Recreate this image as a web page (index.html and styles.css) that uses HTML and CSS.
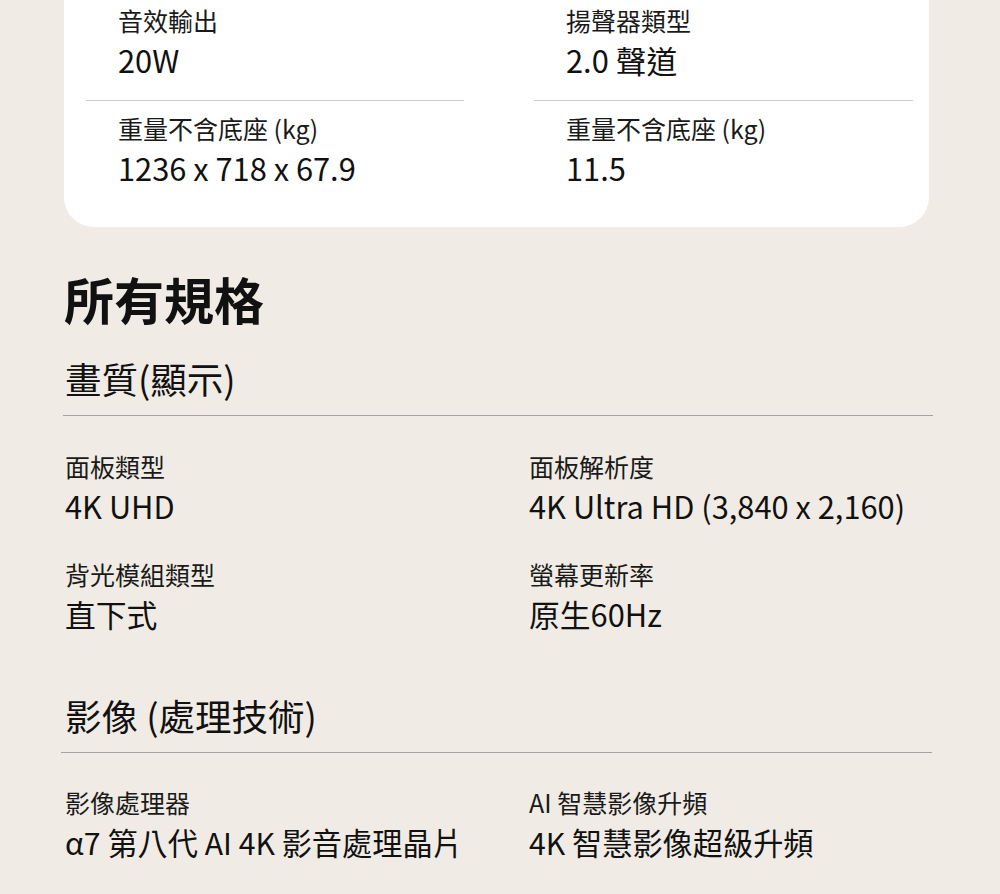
FILE: index.html
```html
<!DOCTYPE html>
<html lang="zh-Hant">
<head>
<meta charset="utf-8">
<title>所有規格</title>
<link rel="stylesheet" href="styles.css">
</head>
<body>
<div class="page">
  <section class="card">
    <div class="card-grid">
      <div class="cell">
        <div class="label">音效輸出</div>
        <div class="value">20W</div>
      </div>
      <div class="cell">
        <div class="label">揚聲器類型</div>
        <div class="value">2.0 聲道</div>
      </div>
      <div class="cell">
        <div class="label">重量不含底座 (kg)</div>
        <div class="value">1236 x 718 x 67.9</div>
      </div>
      <div class="cell">
        <div class="label">重量不含底座 (kg)</div>
        <div class="value">11.5</div>
      </div>
    </div>
  </section>

  <main class="specs">
    <h1 class="title">所有規格</h1>

    <section class="group">
      <h2 class="group-title">畫質(顯示)</h2>
      <div class="spec-grid">
        <div class="spec">
          <div class="label">面板類型</div>
          <div class="value">4K UHD</div>
        </div>
        <div class="spec">
          <div class="label">面板解析度</div>
          <div class="value">4K Ultra HD (3,840 x 2,160)</div>
        </div>
        <div class="spec">
          <div class="label">背光模組類型</div>
          <div class="value">直下式</div>
        </div>
        <div class="spec">
          <div class="label">螢幕更新率</div>
          <div class="value">原生60Hz</div>
        </div>
      </div>
    </section>

    <section class="group group-2">
      <h2 class="group-title">影像 (處理技術)</h2>
      <div class="spec-grid">
        <div class="spec">
          <div class="label">影像處理器</div>
          <div class="value">α7 第八代 AI 4K 影音處理晶片</div>
        </div>
        <div class="spec">
          <div class="label">AI 智慧影像升頻</div>
          <div class="value">4K 智慧影像超級升頻</div>
        </div>
      </div>
    </section>
  </main>
</div>
</body>
</html>
```

FILE: styles.css
```css
* { box-sizing: border-box; }

html, body {
  margin: 0;
  padding: 0;
  background: #f0ece5;
}

body {
  font-family: "Noto Sans CJK TC", "Noto Sans", sans-serif;
  color: #111;
  width: 1000px;
  height: 894px;
  overflow: hidden;
}

.card {
  margin-left: 64px;
  width: 865px;
  background: #ffffff;
  border-radius: 0 0 30px 30px;
  padding: 2px 17px 39px 22px;
}

.card-grid {
  display: grid;
  grid-template-columns: 378px 379px;
  column-gap: 70px;
}

.cell {
  padding-left: 32px;
}

.cell:nth-child(1),
.cell:nth-child(2) {
  padding-bottom: 20px;
  border-bottom: 1px solid #cccccc;
}

.cell:nth-child(3),
.cell:nth-child(4) {
  padding-top: 9px;
}

.label {
  font-size: 25px;
  line-height: 36px;
  color: #1a1a1a;
  white-space: nowrap;
}

.value {
  font-size: 30.8px;
  line-height: 40px;
  margin-top: 2px;
  color: #111;
  white-space: nowrap;
}

.specs {
  margin-left: 63px;
  width: 870px;
  padding-top: 41px;
}

.title {
  margin: 0;
  padding-left: 1px;
  font-size: 50px;
  line-height: 60px;
  font-weight: 700;
}

.group {
  margin-top: 27px;
}

.group-2 {
  margin-top: 58px;
}

.group-title {
  margin: 0;
  padding: 0 0 12px 2px;
  font-size: 36.5px;
  line-height: 48px;
  font-weight: 400;
  border-bottom: 1px solid #a6a39e;
}

.group-2 .group-title {
  margin-left: -2px;
  padding-left: 4px;
  width: 871px;
}

.spec-grid {
  display: grid;
  grid-template-columns: 464px 1fr;
  row-gap: 30px;
  padding: 32px 0 0 2px;
}

.group-2 .spec-grid {
  padding-top: 31px;
}

.group-2 .value {
  font-size: 30.2px;
}
```
